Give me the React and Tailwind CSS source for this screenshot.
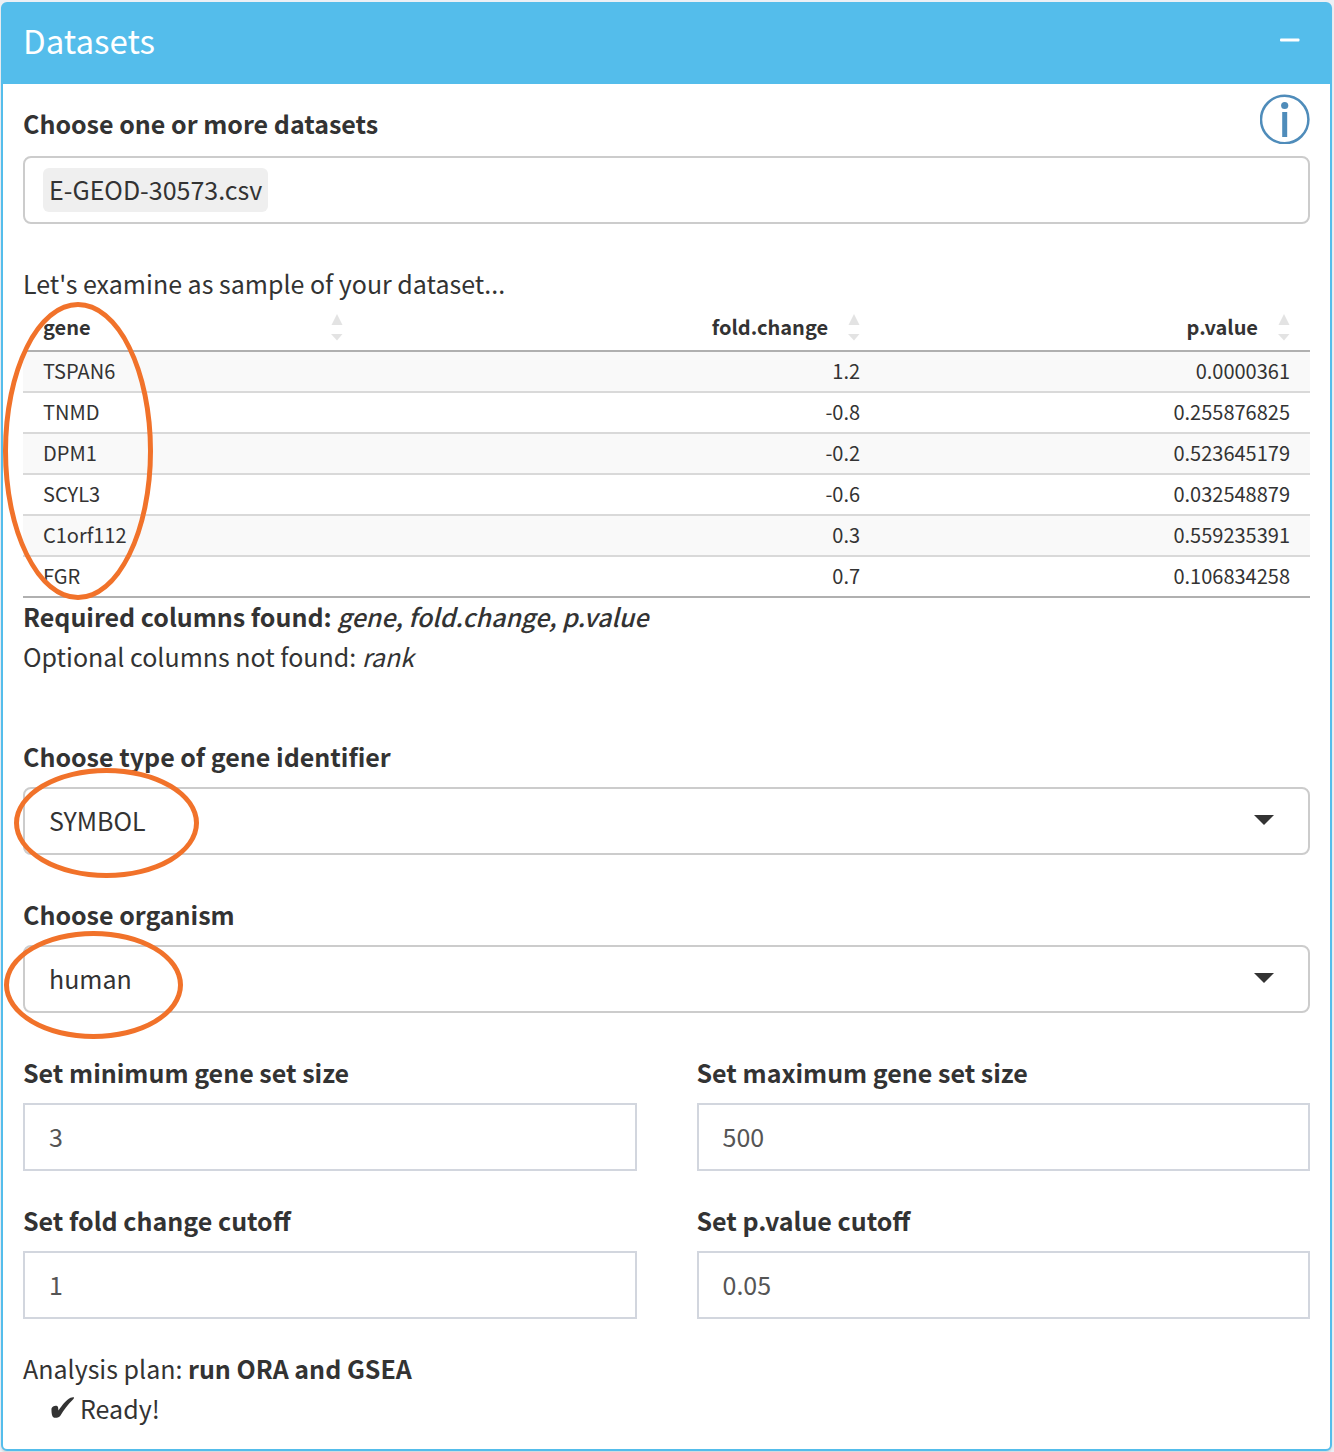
const GENES = [
  ["TSPAN6", "1.2", "0.0000361"],
  ["TNMD", "-0.8", "0.255876825"],
  ["DPM1", "-0.2", "0.523645179"],
  ["SCYL3", "-0.6", "0.032548879"],
  ["C1orf112", "0.3", "0.559235391"],
  ["FGR", "0.7", "0.106834258"],
];

function SortIcon() {
  return (
    <svg width="12" height="27" viewBox="0 0 12 27" fill="#e3e3e3" aria-hidden="true" className="shrink-0">
      <path d="M6 0 11.5 11H.5Z" />
      <path d="M0 20H11.500L6 26.500Z" />
    </svg>
  );
}

function Highlight({ className }) {
  return (
    <span
      aria-hidden="true"
      className={`pointer-events-none absolute rounded-[50%] border-[5px] border-[#f1722a] ${className}`}
    />
  );
}

function HeaderCell({ children, className, align }) {
  return (
    <th scope="col" className={`border-b-2 border-[#b0b0b0] p-0 font-bold ${className}`}>
      <button type="button" className={`flex h-[46px] w-full items-center pr-5 pl-5 ${align}`}>
        {children}
        <SortIcon />
      </button>
    </th>
  );
}

function SelectField({ id, label, value, highlight }) {
  return (
    <div className="mb-10">
      <label htmlFor={id} className="mb-3 block leading-[38px] font-bold">
        {label}
      </label>
      <div className="relative">
        <select
          id={id}
          defaultValue={value}
          className="block h-[68px] w-full appearance-none rounded-lg border-2 border-[#cccccc] bg-white px-6 pb-0.5 text-[#333333]"
        >
          <option>{value}</option>
        </select>
        <svg
          width="20"
          height="10"
          viewBox="0 0 20 10"
          fill="#333333"
          aria-hidden="true"
          className="pointer-events-none absolute top-7 right-9"
        >
          <path d="M0 0H20L10 10Z" />
        </svg>
        <Highlight className={highlight} />
      </div>
    </div>
  );
}

function NumberField({ id, label, value }) {
  return (
    <div>
      <label htmlFor={id} className="mb-3 block leading-[38px] font-bold">
        {label}
      </label>
      <input
        id={id}
        type="text"
        inputMode="decimal"
        defaultValue={value}
        className="block h-[68px] w-full border-2 border-[#d2d6de] bg-white px-6 pb-0.5 text-[#555555]"
      />
    </div>
  );
}

export default function App() {
  return (
    <main className="bg-[#ecf0f5] pt-0.5 pr-0.5 pb-px pl-px font-['Noto_Sans_CJK_SC',sans-serif] text-[25px] leading-10 text-[#333333]">
      <section className="rounded-md border-2 border-[#54bdeb] bg-white shadow-[0_2px_2px_rgba(0,0,0,0.1)]">
        <header className="flex h-20 items-center justify-between bg-[#54bdeb] px-5 pb-2 text-white">
          <h1 className="text-[33px] leading-10">Datasets</h1>
          <button type="button" aria-label="Collapse" className="flex h-10 items-center pr-2.5">
            <svg width="20" height="4" viewBox="0 0 20 4" fill="currentColor" aria-hidden="true">
              <rect y=".5" width="19.500" height="3" rx="1" />
            </svg>
          </button>
        </header>

        <div className="p-5">
          <div className="mb-3 flex h-10 items-start justify-between">
            <label htmlFor="datasets" className="leading-[38px] font-bold">
              Choose one or more datasets
            </label>
            <button type="button" aria-label="Help" className="-mt-2.5">
              <svg width="50" height="50" viewBox="0 0 50 50" aria-hidden="true">
                <circle cx="24.700" cy="25.500" r="23.700" fill="none" stroke="#4f8cba" strokeWidth="2.500" />
                <circle cx="24.700" cy="11.500" r="3.600" fill="#4f8cba" />
                <rect x="22.200" y="18" width="5" height="25" fill="#4f8cba" />
              </svg>
            </button>
          </div>
          <div className="flex h-[68px] items-center rounded-lg border-2 border-[#cccccc] px-[18px]">
            <span className="flex h-11 items-center rounded-md bg-[#efefef] px-1.5 pb-0.5">E-GEOD-30573.csv</span>
            <input id="datasets" type="text" className="min-w-0 flex-1 outline-none" />
          </div>

          <p className="mt-10 mb-0.5 leading-[38px]">Let's examine as sample of your dataset...</p>
          <div className="relative">
            <table className="w-full table-fixed border-separate border-spacing-0 text-[20px] leading-6">
              <thead>
                <tr>
                  <HeaderCell className="w-[26.400%]" align="justify-between">gene</HeaderCell>
                  <HeaderCell className="w-[40.200%]" align="justify-end gap-5">fold.change</HeaderCell>
                  <HeaderCell align="justify-end gap-5">p.value</HeaderCell>
                </tr>
              </thead>
              <tbody>
                {GENES.map(([gene, change, pvalue]) => (
                  <tr
                    key={gene}
                    className="h-[41px] odd:bg-[#f9f9f9] *:border-b-2 *:border-[#d9d9d9] *:px-5 *:pt-0 *:pb-px last:*:border-[#b0b0b0]"
                  >
                    <td>{gene}</td>
                    <td className="text-right">{change}</td>
                    <td className="text-right">{pvalue}</td>
                  </tr>
                ))}
              </tbody>
            </table>
            <Highlight className="-top-0.5 -left-5 h-[298px] w-[150px]" />
          </div>
          <div className="-mt-0.5 mb-[61px]">
            <p className="font-bold">
              Required columns found: <em className="font-medium">gene, fold.change, p.value</em>
            </p>
            <p>
              Optional columns not found: <em>rank</em>
            </p>
          </div>

          <SelectField
            id="identifier"
            label="Choose type of gene identifier"
            value="SYMBOL"
            highlight="-top-[19px] -left-[9px] h-[110px] w-[185px]"
          />
          <SelectField
            id="organism"
            label="Choose organism"
            value="human"
            highlight="-top-3.5 -left-[19px] h-[108px] w-[179px]"
          />

          <div className="grid grid-cols-2 gap-x-[60px] gap-y-[30px]">
            <NumberField id="min-size" label="Set minimum gene set size" value="3" />
            <NumberField id="max-size" label="Set maximum gene set size" value="500" />
            <NumberField id="fold-cutoff" label="Set fold change cutoff" value="1" />
            <NumberField id="p-cutoff" label="Set p.value cutoff" value="0.05" />
          </div>

          <div className="mt-[29px] mb-px">
            <p>
              Analysis plan: <strong>run ORA and GSEA</strong>
            </p>
            <p className="flex items-center gap-1.5 pl-7">
              <svg width="23" height="22" viewBox="0 0 23 22" fill="currentColor" aria-hidden="true">
                <path d="M.5 11.500C1 9 6 7.500 7 10L7.500 13.500C11 8.500 15 3 19.500 .8 21 .2 22.500 0 23 .5 23.300 1 22.500 2 21.500 3 17 7.500 12.500 13 9.500 18.500 8.500 20.500 4 21.500 2.300 20.300 .8 19 .3 15 .5 11.500Z" />
              </svg>
              Ready!
            </p>
          </div>
        </div>
      </section>
    </main>
  );
}
